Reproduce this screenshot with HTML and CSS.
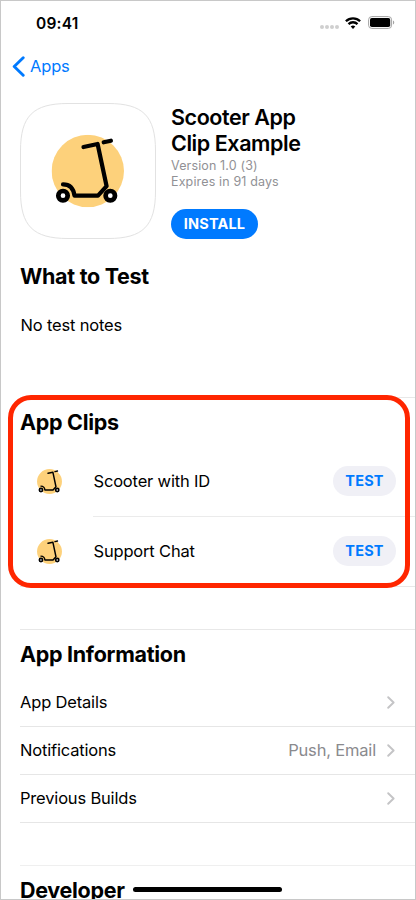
FILE: index.html
```html
<!DOCTYPE html>
<html lang="en">
<head>
<meta charset="utf-8">
<title>Scooter App Clip Example</title>
<link rel="stylesheet" href="styles.css">
</head>
<body>
<svg class="defs" aria-hidden="true">
  <symbol id="scooter" viewBox="51.5 135 72.6 72.6">
    <circle cx="87.8" cy="171.3" r="36.2" fill="#fdd17b"/>
    <g fill="none" stroke="#000" stroke-width="4.2" stroke-linecap="round" stroke-linejoin="round">
      <path d="M83.5 147.3 97.6 144.3 106.6 186.5 98 196H74.5C73.5 188.5 69.5 184.7 63 184.7M103.7 142.6l7.2-1.6"/>
      <circle cx="63" cy="196" r="4.7" fill="#fff" stroke-width="4.7"/>
      <circle cx="110.3" cy="196" r="4.7" fill="#fff" stroke-width="4.7"/>
    </g>
  </symbol>
  <symbol id="chevron" viewBox="0 0 8 13">
    <path d="M1.2 1.2 6.6 6.5 1.2 11.8" fill="none" stroke="#c4c4c6" stroke-width="1.9" stroke-linecap="round" stroke-linejoin="round"/>
  </symbol>
</svg>
<div class="phone">
  <header class="status">
    <span class="time">09:41</span>
    <span class="signal"><i></i><i></i><i></i><i></i></span>
    <svg class="wifi" viewBox="0 0 16 12">
      <g fill="none" stroke="#000" stroke-width="2.3">
        <path d="M.9 4.2a10.1 10.1 0 0 1 14.2 0"/>
        <path d="M3.5 7.1a6.4 6.4 0 0 1 9 0"/>
      </g>
      <path d="M8 12 5.7 9.6a3.3 3.3 0 0 1 4.6 0z"/>
    </svg>
    <svg class="battery" viewBox="0 0 27 13">
      <rect x=".6" y=".6" width="23" height="11.8" rx="3.2" fill="none" stroke="#a3a3a3"/>
      <rect x="2" y="2" width="20.2" height="9" rx="1.8"/>
      <path d="M25 4.5v4c1.7-.6 1.7-3.4 0-4" fill="#a3a3a3"/>
    </svg>
  </header>
  <nav class="nav">
    <svg class="back" viewBox="0 0 13 21"><path d="M11.2 1.7 2.2 10.5 11.2 19.3" fill="none" stroke="#007aff" stroke-width="2.9" stroke-linecap="round" stroke-linejoin="round"/></svg>
    <span class="back-label">Apps</span>
  </nav>
  <section class="hero">
    <svg class="app-icon" viewBox="0 0 136 136">
      <path d="M.5 48C.5 13 13 .5 48 .5H88C123 .5 135.500 13 135.500 48V88C135.500 123 123 135.500 88 135.500H48C13 135.500 .5 123 .5 88Z" fill="#fff" stroke="#e2e2e2"/>
      <use href="#scooter" x="31.500" y="31.700" width="72.600" height="72.600"/>
    </svg>
    <div class="info">
      <h1>Scooter App<br>Clip Example</h1>
      <p class="meta">Version 1.0 (3)</p>
      <p class="meta">Expires in 91 days</p>
      <button class="install">INSTALL</button>
    </div>
  </section>
  <section class="notes">
    <h2>What to Test</h2>
    <p>No test notes</p>
  </section>
  <section class="clips">
    <h2>App Clips</h2>
    <div class="clip">
      <svg class="clip-icon"><use href="#scooter"/></svg>
      <div class="clip-body"><span>Scooter with ID</span><button class="test">TEST</button></div>
    </div>
    <div class="clip last">
      <svg class="clip-icon"><use href="#scooter"/></svg>
      <div class="clip-body"><span>Support Chat</span><button class="test">TEST</button></div>
    </div>
    <div class="highlight"></div>
  </section>
  <section class="details">
    <h2>App Information</h2>
    <div class="row"><span>App Details</span><svg class="chev"><use href="#chevron"/></svg></div>
    <div class="row"><span>Notifications</span><span class="value">Push, Email</span><svg class="chev"><use href="#chevron"/></svg></div>
    <div class="row"><span>Previous Builds</span><svg class="chev"><use href="#chevron"/></svg></div>
  </section>
  <section class="developer"><h2>Developer</h2></section>
  <div class="home"></div>
</div>
</body>
</html>
```
FILE: styles.css
```css
* { box-sizing: border-box; }
body { margin: 0; background: #fff; color: #000; font: 16.5px/20px Inter, "Liberation Sans", sans-serif; letter-spacing: -0.18px; }
h1, h2, p { margin: 0; }
button { border: 0; padding: 0; font: 700 14.5px/30px Inter, sans-serif; letter-spacing: 0.15px; border-radius: 15px; height: 30px; }
svg { display: block; flex: none; }
.defs { position: absolute; width: 0; height: 0; }
.phone { position: relative; width: 416px; height: 900px; border: 1px solid #c8c8c8; overflow: hidden; display: flex; flex-direction: column; }
.phone > * { flex: none; }

.status { height: 44px; display: flex; align-items: center; padding: 0 20px 0 35px; }
.time { font-size: 15.5px; font-weight: 600; letter-spacing: 0.2px; margin: 1px auto 0 0; }
.signal { display: flex; gap: 1px; margin: 7px 6px 0 0; }
.signal i { width: 4px; height: 4px; border-radius: 50%; background: #cfcfcf; }
.wifi { width: 16px; height: 12px; margin: -1px 7px 0 0; }
.battery { width: 27px; height: 13px; margin-top: -1px; }

.nav { height: 44px; display: flex; align-items: center; padding: 0 0 1px 11px; color: #007aff; }
.back { width: 13px; height: 21px; margin-right: 5px; }
.back-label { margin-bottom: 1px; }

.hero { height: 150px; padding: 14px 0 0 19px; display: flex; }
.app-icon { width: 136px; height: 136px; margin-right: 15px; }
.info { padding-top: 1px; }
h1 { font-size: 21.5px; line-height: 26px; font-weight: 600; letter-spacing: -0.43px; margin-bottom: 2px; }
.meta { font-size: 12.5px; line-height: 16px; color: #919195; letter-spacing: 0.14px; }
.install { display: block; margin-top: 19px; width: 87px; background: #007aff; color: #fff; }

h2 { font-size: 21.5px; line-height: 26px; font-weight: 700; letter-spacing: -0.3px; }
.notes { height: 158px; padding: 24px 0 0 19px; }
.notes p { margin-top: 26px; padding-left: 0.5px; }

.clips { position: relative; height: 190px; margin-left: 19px; border-top: 1px solid #e8e8e8; border-bottom: 1px solid #e8e8e8; padding-top: 11px; }
.clip { height: 70px; display: flex; align-items: center; }
.clips h2 { margin-bottom: 11px; }
.clip-icon { width: 25px; height: 25px; margin: 0 31px 0 17px; }
.clip-body { flex: 1; height: 72px; display: flex; align-items: center; justify-content: space-between; padding: 0 19px 0 0.5px; border-bottom: 1px solid #ebebeb; }
.last .clip-body { border-bottom-color: transparent; }
.test { width: 63px; background: #f0f0f6; color: #007aff; }
.highlight { position: absolute; left: -12px; top: -3px; width: 402px; height: 193px; border: 5px solid #ff2600; border-radius: 23px; }

.details { margin: 42px 0 0 19px; border-top: 1px solid #e8e8e8; padding-top: 11px; }
.details h2 { margin-bottom: 12px; }
.row { height: 48px; display: flex; align-items: center; padding: 0 20px 1px 0; border-bottom: 1px solid #e6e6e6; }
.row span:first-child { margin-right: auto; }
.value { color: #8a8a8e; margin-right: 11px; }
.chev { width: 8px; height: 13px; }
.developer { margin: 42px 0 0 19px; border-top: 1px solid #efefef; padding-top: 11px; }
.home { position: absolute; left: 132px; bottom: 7px; width: 149px; height: 5px; border-radius: 3px; background: #000; }
```
